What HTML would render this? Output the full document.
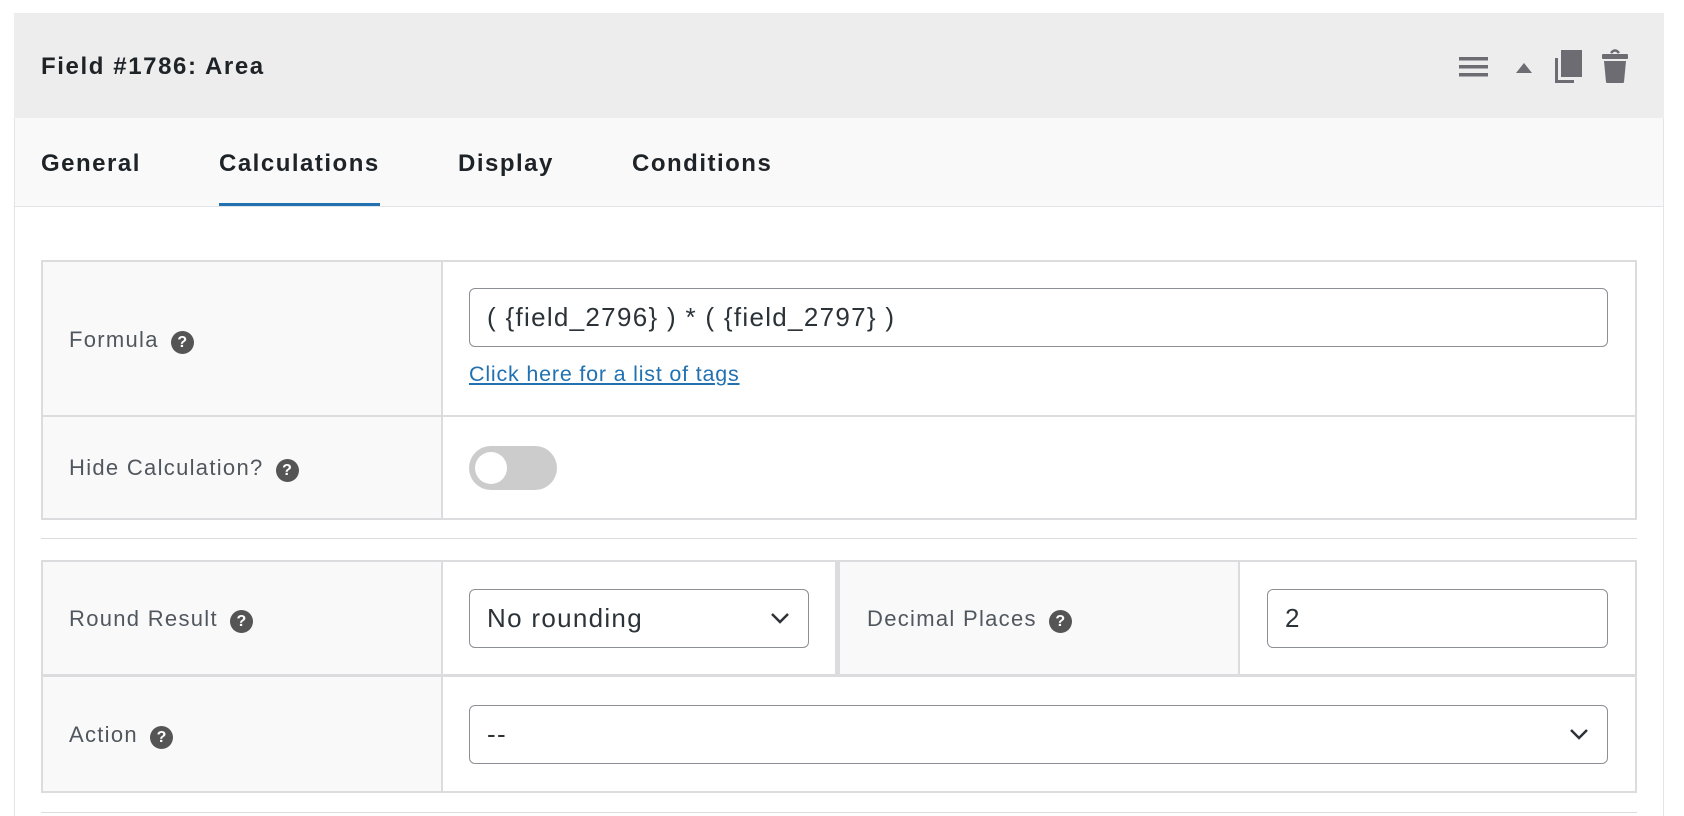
<!DOCTYPE html>
<html><head><meta charset="utf-8"><style>
*{box-sizing:border-box;margin:0;padding:0}
body{width:1684px;height:816px;background:#fff;font-family:"Liberation Sans",Arial,sans-serif;position:relative;overflow:hidden;color:#1d2327}
.a{position:absolute;white-space:nowrap}
.panel{left:14px;top:13px;width:1650px;height:803px;border:1px solid #e2e4e7;border-bottom:none;background:#fff}
.hdr{left:14px;top:13px;width:1650px;height:105px;background:#ededed}
.tabs{left:15px;top:118px;width:1648px;height:89px;background:#f9f9f9;border-bottom:1px solid #e2e4e7}
.title{left:41px;top:53px;font-size:24px;font-weight:bold;line-height:28px;letter-spacing:1.6px}
.tab{top:150px;font-size:24px;font-weight:bold;line-height:28px;letter-spacing:1.5px}
.lbl{font-size:22px;color:#50575e;line-height:24px;letter-spacing:1.3px}
.q{display:inline-block;width:23px;height:23px;border-radius:50%;background:#555;color:#fff;font-size:16px;font-weight:bold;text-align:center;line-height:23px;vertical-align:0px;margin-left:12px;letter-spacing:0}
.inp{border:1.5px solid #8c8f94;border-radius:6px;background:#fff;font-size:26px;color:#2c3338;padding-left:17px;display:flex;align-items:center;letter-spacing:1.3px}
.gl{background:#f9f9f9}
.bd{border:2px solid #dcdcde}
</style></head><body>
<div class="a panel"></div>
<div class="a hdr"></div>
<div class="a title">Field #1786: Area</div>
<svg class="a" style="left:1458px;top:55px" width="32" height="24"><rect x="1" y="2" width="29" height="3.5" fill="#6c6c72"/><rect x="1" y="10" width="29" height="3.5" fill="#6c6c72"/><rect x="1" y="18" width="29" height="3.5" fill="#6c6c72"/></svg>
<svg class="a" style="left:1514px;top:60px" width="20" height="14"><path d="M2 13 L10 3 L18 13Z" fill="#6c6c72"/></svg>
<svg class="a" style="left:1552px;top:49px" width="32" height="36"><rect x="9" y="1" width="21" height="27" fill="#6c6c72"/><path d="M3 9 V34 H22 V31 H6 V9Z" fill="#6c6c72"/></svg>
<svg class="a" style="left:1600px;top:48px" width="30" height="38"><path d="M11 5 Q15 0 19 5" stroke="#6c6c72" stroke-width="2.5" fill="none"/><rect x="2" y="6" width="26" height="5" rx="1" fill="#6c6c72"/><path d="M4 13 H26 L24 34 Q24 35 22 35 H8 Q6 35 6 34Z" fill="#6c6c72"/></svg>
<div class="a tabs"></div>
<div class="a tab" style="left:41px">General</div>
<div class="a tab" style="left:219px">Calculations</div>
<div class="a tab" style="left:458px">Display</div>
<div class="a tab" style="left:632px">Conditions</div>
<div class="a" style="left:219px;top:203px;width:161px;height:3px;background:#2271b1"></div>

<div class="a bd" style="left:41px;top:260px;width:1596px;height:260px;background:#fff"></div>
<div class="a gl" style="left:43px;top:262px;width:398px;height:256px"></div>
<div class="a" style="left:441px;top:262px;width:2px;height:256px;background:#dcdcde"></div>
<div class="a" style="left:43px;top:415px;width:1592px;height:2px;background:#dcdcde"></div>
<div class="a lbl" style="left:69px;top:328px">Formula<span class="q">?</span></div>
<div class="a lbl" style="left:69px;top:456px">Hide Calculation?<span class="q">?</span></div>
<div class="a inp" style="left:469px;top:288px;width:1139px;height:59px">( {field_2796} ) * ( {field_2797} )</div>
<div class="a" style="left:469px;top:362px;font-size:21.5px;letter-spacing:0.8px;color:#2271b1;text-decoration:underline">Click here for a list of tags</div>
<div class="a" style="left:469px;top:446px;width:88px;height:44px;border-radius:22px;background:#ccc"></div>
<div class="a" style="left:475px;top:452px;width:32px;height:32px;border-radius:50%;background:#fff"></div>

<div class="a" style="left:41px;top:538px;width:1596px;height:1px;background:#dcdcde"></div>

<div class="a bd" style="left:41px;top:560px;width:1596px;height:233px;background:#fff"></div>
<div class="a gl" style="left:43px;top:562px;width:398px;height:229px"></div>
<div class="a gl" style="left:839px;top:562px;width:400px;height:113px"></div>
<div class="a" style="left:441px;top:562px;width:2px;height:229px;background:#dcdcde"></div>
<div class="a" style="left:835px;top:562px;width:5px;height:113px;background:#dcdcde"></div>
<div class="a" style="left:1238px;top:562px;width:2px;height:113px;background:#dcdcde"></div>
<div class="a" style="left:43px;top:674px;width:1592px;height:3px;background:#dcdcde"></div>
<div class="a lbl" style="left:69px;top:607px">Round Result<span class="q">?</span></div>
<div class="a lbl" style="left:867px;top:607px">Decimal Places<span class="q">?</span></div>
<div class="a lbl" style="left:69px;top:723px">Action<span class="q">?</span></div>
<div class="a inp" style="left:469px;top:589px;width:340px;height:59px">No rounding</div>
<svg class="a" style="left:770px;top:611px" width="20" height="14"><path d="M2 3 L10 11 L18 3" stroke="#2c3338" stroke-width="2.5" fill="none"/></svg>
<div class="a inp" style="left:1267px;top:589px;width:341px;height:59px">2</div>
<div class="a inp" style="left:469px;top:705px;width:1139px;height:59px">--</div>
<svg class="a" style="left:1569px;top:727px" width="20" height="14"><path d="M2 3 L10 11 L18 3" stroke="#2c3338" stroke-width="2.5" fill="none"/></svg>
<div class="a" style="left:41px;top:812px;width:1596px;height:1px;background:#dcdcde"></div>
</body></html>
